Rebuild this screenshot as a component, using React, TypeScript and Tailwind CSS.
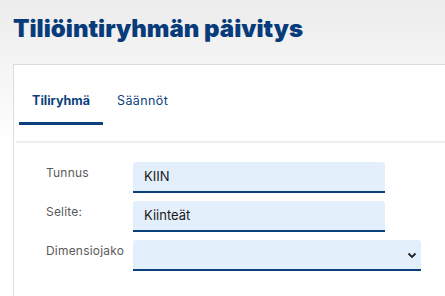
import React from 'react';

const font = { fontFamily: 'Inter, "Noto Sans", sans-serif' };

const Field: React.FC<{ label: string; value?: string; wide?: boolean; select?: boolean }> = ({ label, value, wide, select }) => (
  <div className="flex items-start">
    <div className="w-[87px] shrink-0 pt-[2px] text-[12px] tracking-[0.2px] text-[#5a5a5a]">{label}</div>
    <div
      className={`relative h-[31px] ${wide ? 'w-[288px]' : 'w-[252px]'} flex items-center rounded-t-[3px] bg-[#e4effc] border-b-2 border-[#0b3f7e] pl-[11px] text-[13px] text-[#1a1a1a]`}
    >
      {value}
      {select && (
        <svg className="absolute right-[4px] top-[12px]" width="10" height="7" viewBox="0 0 10 7">
          <path d="M1.5 1.5 L5 5 L8.5 1.5" fill="none" stroke="#222" strokeWidth="1.8" />
        </svg>
      )}
    </div>
  </div>
);

export default function App() {
  return (
    <div className="w-[445px] h-[296px] overflow-hidden bg-gradient-to-b from-[#ececec] via-white to-white" style={font}>
      <div className="pl-[13px] pt-[14px]">
        <h1 className="text-[24px] leading-[30px] font-black text-[#073b7a]">Tiliöintiryhmän päivitys</h1>
        <div className="mt-[20px] h-[240px] border-l border-t border-[#dcdcdc] bg-white pl-[2px]">
          <div className="flex h-[60px] items-end pl-[3px]">
            <button className="w-[84px] h-[38px] border-b-[3px] border-[#0b3f7e] text-[12.5px] font-bold text-[#0b3f7e] pb-[6px]">Tiliryhmä</button>
            <button className="ml-[14px] h-[38px] text-[12.5px] tracking-[0.4px] text-[#0b3f7e] pb-[9px]">Säännöt</button>
          </div>
          <div className="mt-[16px] h-[2px] bg-[#efefef]" />
          <div className="mt-[19px] pl-[30px] flex flex-col gap-[8px]">
            <Field label="Tunnus" value="KIIN" />
            <Field label="Selite:" value="Kiinteät" />
            <Field label="Dimensiojako" wide select />
          </div>
        </div>
      </div>
    </div>
  );
}
